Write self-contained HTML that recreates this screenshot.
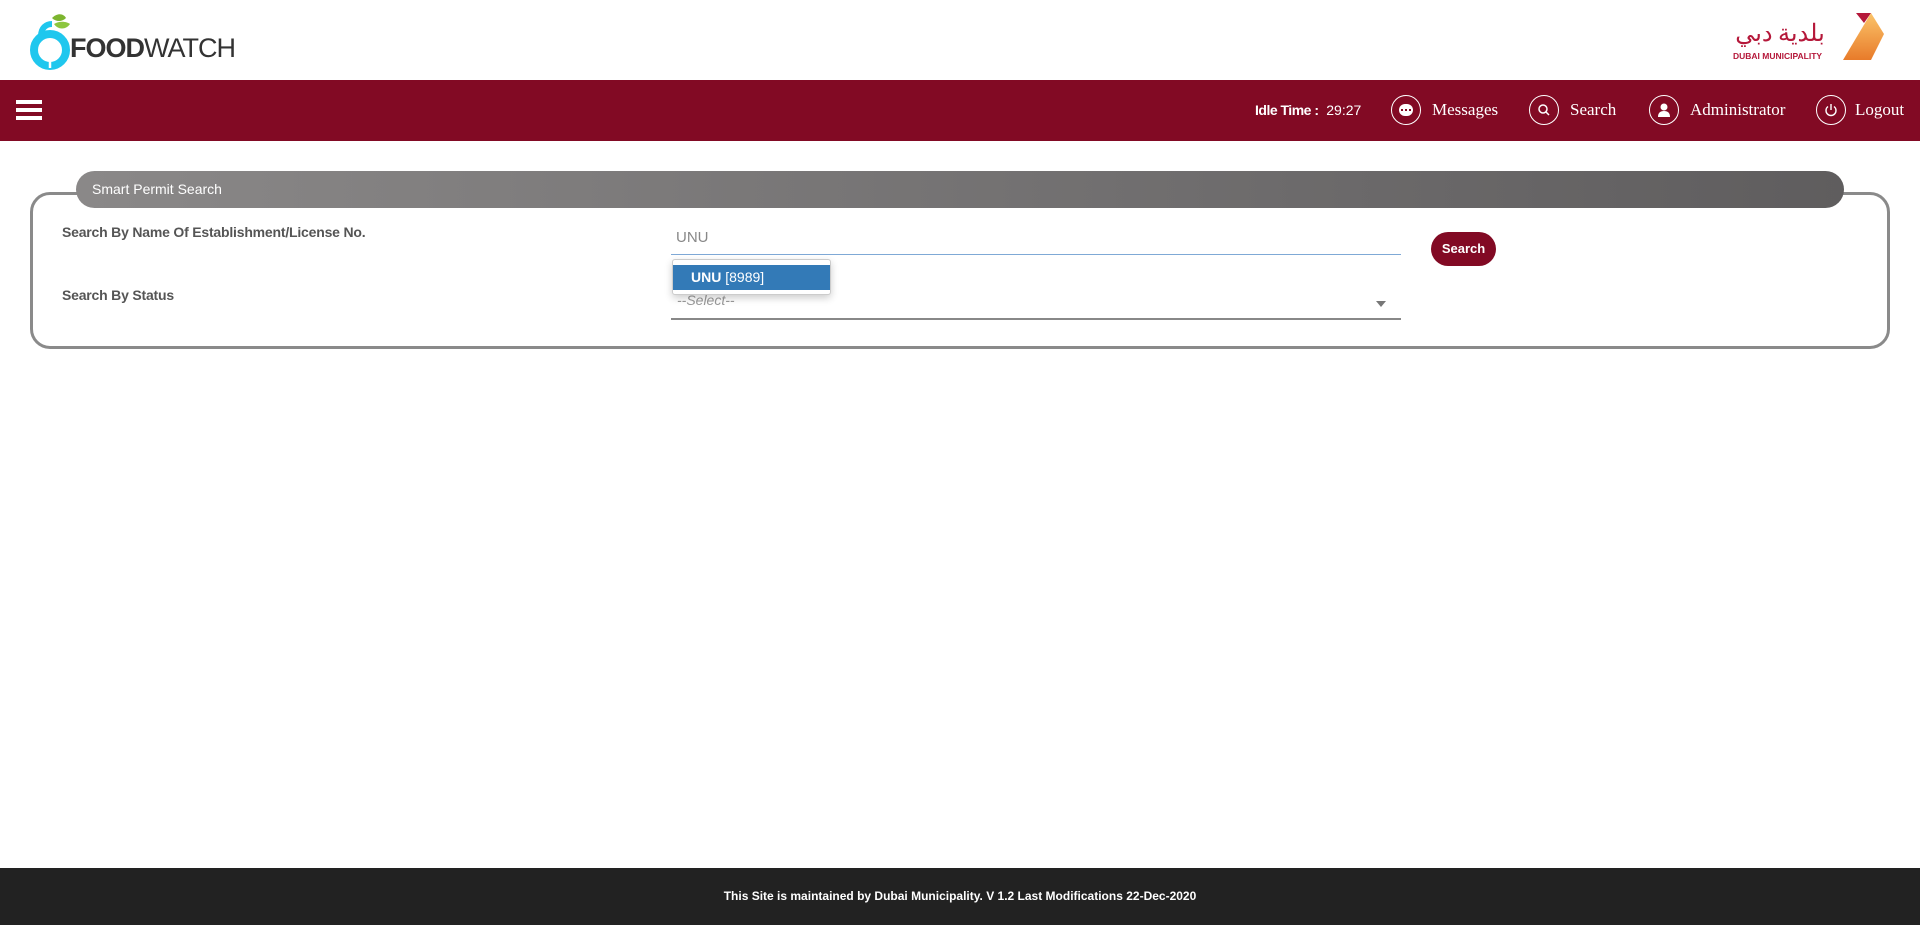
<!DOCTYPE html>
<html><head><meta charset="utf-8"><style>
*{margin:0;padding:0;box-sizing:border-box}
body{width:1920px;height:925px;position:relative;background:#fff;font-family:"Liberation Sans",sans-serif;overflow:hidden}
.abs{position:absolute}
.nav{top:80px;left:0;width:1920px;height:61px;background:#820a24}
.navtxt{font-family:"Liberation Serif",serif;color:#fff;font-size:17px;top:100px}
.circ{width:30px;height:30px;border:1.5px solid #fff;border-radius:50%;top:95px;display:flex;align-items:center;justify-content:center}
</style></head><body>
<!-- logo -->
<svg class="abs" style="left:30px;top:10px" width="45" height="60" viewBox="0 0 45 60">
<path d="M22 8 C28 2 34 4 36 8 C32 12 26 12 22 8Z" fill="#7db52f"/>
<path d="M24 14 C30 10 38 12 40 14 C36 20 28 20 24 14Z" fill="#8cc63f"/>
<circle cx="20" cy="40" r="16" fill="none" stroke="#1fc7ee" stroke-width="8"/>
<path d="M11 26 C11 18 16 14 22 14" fill="none" stroke="#1fc7ee" stroke-width="6"/>
<path d="M16 32v8q0 4 4 4q4 0 4-4v-8M18 32v6M22 32v6M20 44v14" stroke="#fff" stroke-width="2.5" fill="none"/>
</svg>
<div class="abs" style="left:70px;top:35px;font-size:27px;color:#333;letter-spacing:-1px;line-height:1"><b style="font-weight:900">FOOD</b><span style="font-weight:400">WATCH</span></div>
<!-- DM logo -->
<div class="abs" style="left:1733px;top:18px;width:94px;text-align:center;font-family:'Noto Sans CJK SC',sans-serif;font-size:24px;color:#b5183a;line-height:1.1" dir="rtl">بلدية دبي</div>
<div class="abs" style="left:1733px;top:51px;font-size:8.5px;font-weight:bold;color:#b5183a;white-space:nowrap">DUBAI MUNICIPALITY</div>
<svg class="abs" style="left:1828px;top:12px" width="62" height="50" viewBox="0 0 50 50">
<defs><linearGradient id="g" x1="0" y1="0" x2="0" y2="1"><stop offset="0" stop-color="#fbc46a"/><stop offset="1" stop-color="#e87b2a"/></linearGradient></defs>
<path d="M22 1L37 1L30 11Z" fill="#b5183a"/>
<path d="M37 1L50 22L37 48L9 48Z" fill="url(#g)"/>
</svg>
<!-- nav -->
<div class="abs nav"></div>
<div class="abs" style="left:16px;top:100px;width:26px;height:4px;background:#fff"></div>
<div class="abs" style="left:16px;top:108px;width:26px;height:4px;background:#fff"></div>
<div class="abs" style="left:16px;top:116px;width:26px;height:4px;background:#fff"></div>
<div class="abs" style="left:1255px;top:102px;color:#fff;font-size:14px"><b style="letter-spacing:-0.5px">Idle Time :</b>&nbsp; 29:27</div>
<div class="abs circ" style="left:1391px"><div style="width:14px;height:12px;background:#fff;border-radius:6px;display:flex;gap:2px;align-items:center;justify-content:center"><i style="width:2px;height:2px;background:#820a24"></i><i style="width:2px;height:2px;background:#820a24"></i><i style="width:2px;height:2px;background:#820a24"></i></div></div>
<div class="abs navtxt" style="left:1432px">Messages</div>
<div class="abs circ" style="left:1529px"><svg width="14" height="14" viewBox="0 0 14 14"><circle cx="6" cy="6" r="4" stroke="#fff" stroke-width="1.5" fill="none"/><path d="M9 9l3 3" stroke="#fff" stroke-width="1.5"/></svg></div>
<div class="abs navtxt" style="left:1570px">Search</div>
<div class="abs circ" style="left:1649px"><svg width="14" height="16" viewBox="0 0 14 16"><circle cx="7" cy="5" r="3.5" fill="#fff"/><path d="M1 15q0-6 6-6q6 0 6 6z" fill="#fff"/></svg></div>
<div class="abs navtxt" style="left:1690px">Administrator</div>
<div class="abs circ" style="left:1816px"><svg width="14" height="14" viewBox="0 0 14 14"><path d="M4 3.5a5 5 0 1 0 6 0" stroke="#fff" stroke-width="1.4" fill="none"/><path d="M7 1v6" stroke="#fff" stroke-width="1.4"/></svg></div>
<div class="abs navtxt" style="left:1855px">Logout</div>
<!-- box -->
<div class="abs" style="left:30px;top:192px;width:1860px;height:157px;border:3px solid #8a8a8a;border-radius:20px"></div>
<div class="abs" style="left:76px;top:171px;width:1768px;height:37px;border-radius:19px;background:linear-gradient(90deg,#8a8888,#5f5d5e)"></div>
<div class="abs" style="left:92px;top:181px;color:#fff;font-size:14px">Smart Permit Search</div>
<div class="abs" style="left:62px;top:224px;color:#555;font-size:14px;font-weight:bold;letter-spacing:-0.2px">Search By Name Of Establishment/License No.</div>
<div class="abs" style="left:62px;top:287px;color:#555;font-size:14px;font-weight:bold;letter-spacing:-0.2px">Search By Status</div>
<div class="abs" style="left:676px;top:229px;color:#888;font-size:15px">UNU</div>
<div class="abs" style="left:671px;top:254px;width:730px;height:1px;background:#7fa9d6"></div>
<div class="abs" style="left:677px;top:292px;color:#999;font-size:14px;font-style:italic">--Select--</div>
<div class="abs" style="left:1376px;top:301px;width:0;height:0;border-left:5px solid transparent;border-right:5px solid transparent;border-top:6px solid #777"></div>
<div class="abs" style="left:671px;top:318px;width:730px;height:1.5px;background:#888"></div>
<div class="abs" style="left:672px;top:259px;width:159px;height:36px;background:#fff;border:1px solid #ccc;border-radius:3px;box-shadow:0 3px 8px rgba(0,0,0,.2)"><div style="margin-top:5px;height:25px;background:#337ab7;color:#fff;font-size:14px;padding:4px 0 0 18px"><b>UNU</b> [8989]</div></div>
<div class="abs" style="left:1431px;top:232px;width:65px;height:34px;border-radius:17px;background:#820a24;color:#fff;font-size:13px;font-weight:bold;text-align:center;line-height:34px">Search</div>
<!-- footer -->
<div class="abs" style="left:0;top:868px;width:1920px;height:57px;background:#222;color:#fff;font-size:12px;font-weight:bold;text-align:center;line-height:57px">This Site is maintained by Dubai Municipality. V 1.2 Last Modifications 22-Dec-2020</div>
</body></html>
